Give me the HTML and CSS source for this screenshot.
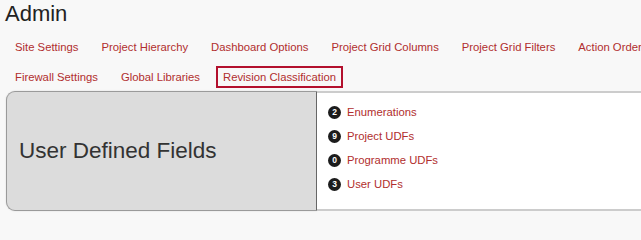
FILE: index.html
```html
<!DOCTYPE html>
<html>
<head>
<meta charset="utf-8">
<link rel="stylesheet" href="styles.css">
</head>
<body>
<div class="page">
  <h1 class="title">Admin</h1>
  <nav class="tabs">
    <a class="tab">Site Settings</a>
    <a class="tab">Project Hierarchy</a>
    <a class="tab">Dashboard Options</a>
    <a class="tab">Project Grid Columns</a>
    <a class="tab">Project Grid Filters</a>
    <a class="tab">Action Order</a>
    <a class="tab">Firewall Settings</a>
    <a class="tab">Global Libraries</a>
    <a class="tab active">Revision Classification</a>
  </nav>
  <section class="panel">
    <div class="panel-head">User Defined Fields</div>
    <ul class="panel-list">
      <li class="item"><span class="badge">2</span><a class="link">Enumerations</a></li>
      <li class="item"><span class="badge">9</span><a class="link">Project UDFs</a></li>
      <li class="item"><span class="badge">0</span><a class="link">Programme UDFs</a></li>
      <li class="item"><span class="badge">3</span><a class="link">User UDFs</a></li>
    </ul>
  </section>
</div>
</body>
</html>
```
FILE: styles.css
```css
html, body {
  margin: 0;
  padding: 0;
  background: #f8f8f8;
  font-family: "Liberation Sans", Arial, sans-serif;
  overflow: hidden;
}
.page {
  box-sizing: border-box;
  width: 641px;
  height: 215px;
  overflow: hidden;
  padding-left: 5px;
}
.title {
  margin: 0;
  font-size: 22px;
  line-height: 28px;
  font-weight: normal;
  color: #222;
}
.tabs {
  display: flex;
  flex-wrap: wrap;
  width: 665px;
  margin-top: 8px;
  padding-left: 3px;
  row-gap: 8px;
  column-gap: 9px;
}
.tab {
  display: block;
  border: 2px solid transparent;
  padding: 2px 5px 2px 5px;
  font-size: 11.3px;
  line-height: 14px;
  color: #b12e2e;
  white-space: nowrap;
}
.tab.active {
  border-color: #b3102d;
}
.panel {
  display: flex;
  margin-top: 3px;
  margin-left: 1px;
  height: 120px;
}
.panel-head {
  box-sizing: border-box;
  flex: none;
  width: 311px;
  display: flex;
  align-items: center;
  padding-left: 12px;
  background: #dcdcdc;
  border: 1px solid #9a9a9a;
  border-right: 1px solid #666;
  border-radius: 9px 0 0 9px;
  box-shadow: 0 0 2px rgba(0,0,0,0.12);
  font-size: 22.5px;
  color: #333;
}
.panel-list {
  flex: 1;
  margin: 0;
  list-style: none;
  background: #fff;
  border-top: 2px solid #cccccc;
  border-bottom: 2px solid #cccccc;
  padding: 7px 0 0 11px;
}
.item {
  display: flex;
  align-items: center;
  height: 24px;
}
.badge {
  display: flex;
  align-items: center;
  justify-content: center;
  width: 13px;
  height: 13px;
  border-radius: 50%;
  background: #1c1c1c;
  color: #fff;
  font-size: 8.5px;
  font-weight: bold;
  margin-right: 6px;
}
.link {
  font-size: 11.3px;
  color: #b12e2e;
}
```
